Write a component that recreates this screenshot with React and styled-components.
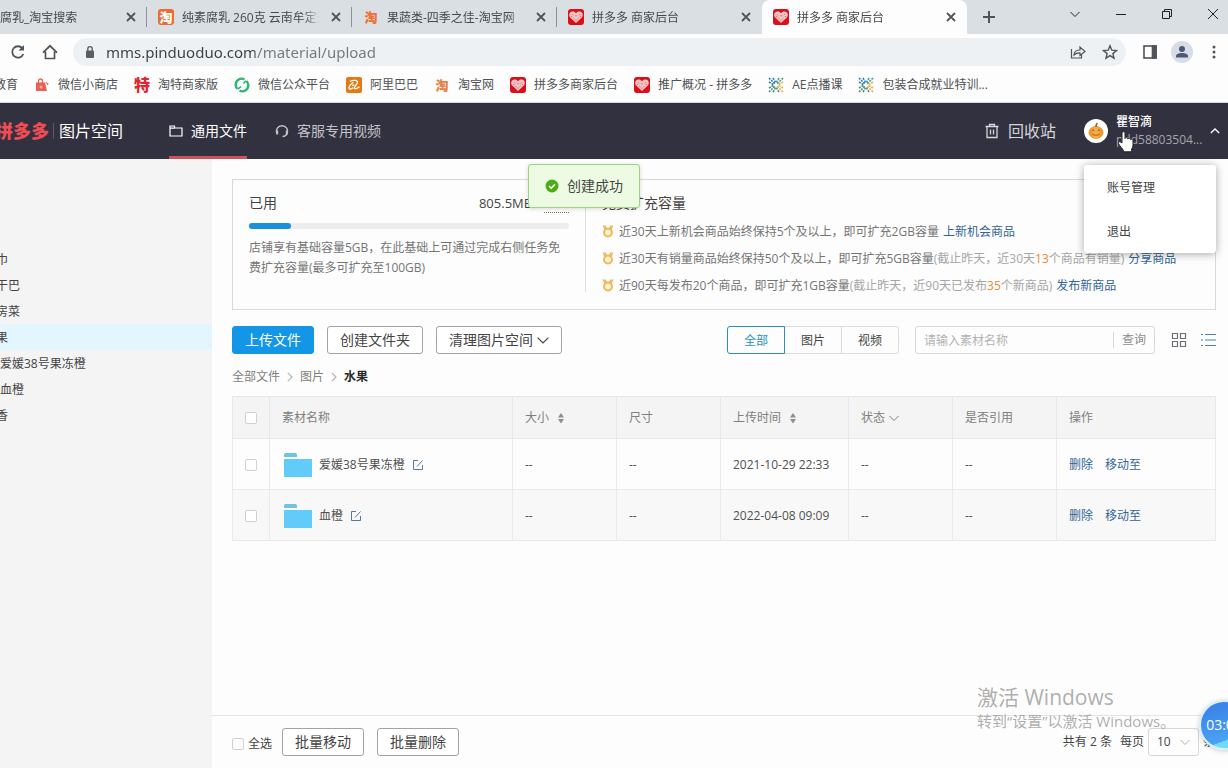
import styled, { createGlobalStyle } from "styled-components";

const GlobalStyle = createGlobalStyle`
  * {
    box-sizing: border-box;
  }
  body {
    margin: 0;
    background: #fdfdfd;
  }
  body, button, input, select {
    font-family: "Open Sans", "Noto Sans CJK SC", sans-serif;
    font-size: 12px;
    line-height: 20px;
    color: #444;
  }
  button, input, select {
    margin: 0;
    padding: 0;
    border: 0;
    background: none;
  }
  a {
    text-decoration: none;
  }
  svg {
    display: block;
    flex: none;
  }
`;

const Page = styled.div`
  position: relative;
  display: flex;
  flex-direction: column;
  min-height: 100vh;
  overflow: hidden;
`;

//---------------------------------
// browser window

const TabStrip = styled.div`
  display: flex;
  height: 34px;
  background: #dadfe3;
`;

const Tab = styled.div`
  display: flex;
  align-items: center;
  flex: none;
  gap: 8px;
  width: ${({ $first }) => ($first ? "147px" : "205px")};
  padding: 0 8px 0 ${({ $first }) => ($first ? "0" : "11px")};
  border-radius: ${({ $active }) => ($active ? "8px 8px 0 0" : "0")};
  background: ${({ $active }) => ($active ? "#fdfdfd" : "none")};
  color: #45494d;
`;

const TabTitle = styled.span`
  flex: 1;
  padding-top: 2px;
  overflow: hidden;
  white-space: nowrap;
  mask-image: linear-gradient(to right, #000 88%, transparent);
`;

const TabDivider = styled.span`
  width: 1px;
  height: 20px;
  margin: 7px 0 0 -1px;
  background: ${({ $hidden }) => ($hidden ? "transparent" : "#8d9297")};
`;

const IconButton = styled.button`
  display: flex;
  align-items: center;
  justify-content: center;
  flex: none;
  width: ${({ $size }) => $size || 16}px;
  height: ${({ $size }) => $size || 16}px;
  color: ${({ $color }) => $color || "#505357"};
`;

const NewTab = styled.div`
  display: flex;
  align-items: center;
  flex: 1;
  padding-left: 14px;
`;

const WindowButtons = styled.div`
  display: flex;
  gap: 30px;
  padding: 6px 7px 0 0;
`;

const Toolbar = styled.div`
  display: flex;
  align-items: center;
  gap: 16px;
  height: 35px;
  padding: 0 6px 0 10px;
`;

const AddressBar = styled.div`
  display: flex;
  align-items: center;
  flex: 1;
  gap: 8px;
  height: 28px;
  padding: 0 8px 0 9px;
  margin-left: -1px;
  border-radius: 14px;
  background: #eef1f3;
`;

const AddressInput = styled.input`
  flex: 1;
  min-width: 0;
  font-size: 15px;
  font-family: "Noto Sans", "Noto Sans CJK SC", sans-serif;
  outline: none;
  color: transparent;
  background-image: linear-gradient(to right, #3c3f43 149px, #74787c 149px);
  background-clip: text;
`;

const AddressIcons = styled.div`
  display: flex;
  gap: 16px;
`;

const ProfileCircle = styled.button`
  display: flex;
  align-items: center;
  justify-content: center;
  width: 22px;
  height: 22px;
  margin: 0 -3px;
  border-radius: 50%;
  background: #d8dce8;
`;

const Bookmarks = styled.nav`
  display: flex;
  align-items: center;
  gap: 16px;
  height: 34px;
  padding-bottom: 2px;
  border-bottom: 1px solid #d4d6da;
`;

const Bookmark = styled.a`
  display: flex;
  align-items: center;
  gap: 8px;
  color: #4d5054;
  white-space: nowrap;
`;

const CutBookmark = styled(Bookmark)`
  justify-content: flex-end;
  width: 18px;
  overflow: hidden;
`;

const GlyphIcon = styled.span`
  flex: none;
  width: 16px;
  height: 16px;
  border-radius: 3px;
  font-size: ${({ $big }) => ($big ? "16px" : "13px")};
  font-weight: 900;
  line-height: 16px;
  text-align: center;
  color: ${({ $color }) => $color};
  background: ${({ $bg }) => $bg || "none"};
`;

//---------------------------------
// site header

const Header = styled.header`
  display: flex;
  align-items: center;
  height: 56px;
  padding-right: 12px;
  background: #32313f;
  color: #fff;
`;

const Logo = styled.div`
  display: flex;
  justify-content: flex-end;
  width: 49px;
  overflow: hidden;
  font-size: 18px;
  font-weight: 900;
  line-height: 28px;
  white-space: nowrap;
  color: #ee4d55;
`;

const SpaceTitle = styled.h1`
  margin: 0 46px 0 4px;
  padding-left: 5px;
  border-left: 1px solid #5a5966;
  font-size: 16px;
  font-weight: 400;
  line-height: 16px;
`;

const HeaderNav = styled.nav`
  display: flex;
  flex: 1;
  gap: 28px;
`;

const HeaderLink = styled.a`
  display: flex;
  align-items: center;
  gap: 8px;
  height: 56px;
  padding-top: 3px;
  border-bottom: 3px solid ${({ $active }) => ($active ? "#cb5459" : "transparent")};
  font-size: 14px;
  color: ${({ $active }) => ($active ? "#fff" : "#c4c4ca")};
`;

const Recycle = styled.a`
  display: flex;
  align-items: center;
  gap: 8px;
  margin-right: 28px;
  font-size: 16px;
  color: #d5d5da;
`;

const UserMenu = styled.div`
  position: relative;
  display: flex;
  align-items: center;
  gap: 8px;
  width: 132px;
  height: 56px;
`;

const UserText = styled.div`
  flex: 1;
  line-height: 18px;
  white-space: nowrap;
`;

const UserName = styled.div`
  font-weight: 500;
`;

const UserAccount = styled.div`
  color: #a5a5ad;
`;

const Dropdown = styled.div`
  position: absolute;
  z-index: 2;
  top: 62px;
  right: 0;
  display: flex;
  flex-direction: column;
  width: 132px;
  border-radius: 3px;
  background: #fff;
  box-shadow: 0 1px 8px rgba(0, 0, 0, 0.35);
`;

const DropdownItem = styled.button`
  height: 44px;
  padding: 2px 23px 0;
  text-align: left;
`;

const HandCursor = styled.svg`
  position: absolute;
  z-index: 3;
  top: 27px;
  left: 33px;
`;

const Toast = styled.div`
  position: absolute;
  z-index: 2;
  top: 164px;
  left: 43%;
  display: flex;
  align-items: center;
  gap: 8px;
  height: 44px;
  padding: 0 16px;
  border: 1px solid #9fd284;
  border-radius: 3px;
  background: #eefbe3;
  box-shadow: 0 1px 4px rgba(0, 0, 0, 0.15);
  font-size: 14px;
`;

//---------------------------------
// body

const Body = styled.div`
  display: flex;
  flex: 1;
`;

const Sidebar = styled.aside`
  flex: none;
  width: 212px;
  padding-top: 87px;
  overflow: hidden;
  background: #f4f4f4;
`;

const Tree = styled.ul`
  margin: 0 0 0 -4px;
  padding: 0;
  list-style: none;
`;

const TreeItem = styled.li`
  height: 26px;
  padding-left: ${({ $level }) => ($level === 2 ? "4px" : "0")};
  line-height: 28px;
  background: ${({ $active }) => ($active ? "#e3f6fd" : "none")};
`;

const Content = styled.div`
  display: flex;
  flex-direction: column;
  flex: 1;
  min-width: 0;
`;

const Main = styled.main`
  flex: 1;
  padding: 20px 12px 0 20px;
`;

const CapacityCard = styled.section`
  display: flex;
  height: 131px;
  padding: 13px 16px 16px;
  border: 1px solid #d9d9d9;
`;

const Used = styled.div`
  width: 337px;
  padding-right: 16px;
  margin-bottom: 1px;
  border-right: 1px solid #e0e0e0;
  color: #757575;
`;

const UsedRow = styled.div`
  display: flex;
  justify-content: space-between;
  margin-bottom: 10px;
  font-size: 14px;
  color: #444;
`;

const Amount = styled.span`
  font-size: 13px;
`;

const Limit = styled.span`
  border-bottom: 1px dotted #777;
`;

const Meter = styled.div`
  height: 6px;
  margin-bottom: 9px;
  border-radius: 3px;
  background: #ededee;
`;

const MeterFill = styled.div`
  height: 6px;
  border-radius: 3px;
  background: #1890dc;
`;

const Tasks = styled.div`
  flex: 1;
  padding-left: 16px;
`;

const TasksTitle = styled.h2`
  margin: 0 0 5px;
  font-size: 14px;
  font-weight: 400;
  line-height: 20px;
`;

const Task = styled.div`
  display: flex;
  align-items: center;
  gap: 5px;
  height: 27px;
  color: #757575;
  white-space: nowrap;
`;

const Muted = styled.span`
  color: #a6a6a6;
`;

const Orange = styled.span`
  color: #ef8a2b;
`;

const Link = styled.a`
  margin-left: ${({ $gap }) => $gap || 0}px;
  color: #336596;
`;

const Actions = styled.div`
  display: flex;
  align-items: center;
  gap: 13px;
  margin: 16px 0 13px;
`;

const Button = styled.button`
  display: flex;
  align-items: center;
  gap: 4px;
  height: 28px;
  padding: 0 12px;
  border: 1px solid ${({ $primary }) => ($primary ? "#1496e8" : "#a3a3a3")};
  border-radius: 3px;
  background: ${({ $primary }) => ($primary ? "#1496e8" : "#fff")};
  font-size: 14px;
  color: ${({ $primary }) => ($primary ? "#fff" : "#444")};
  white-space: nowrap;
`;

const Segments = styled.div`
  display: flex;
  margin-left: auto;
`;

const Segment = styled.button`
  position: relative;
  z-index: ${({ $active }) => ($active ? 1 : 0)};
  width: 58px;
  height: 28px;
  margin-right: -1px;
  padding-top: 2px;
  border: 1px solid ${({ $active }) => ($active ? "#2a8fc0" : "#dcdcdc")};
  color: ${({ $active }) => ($active ? "#2a8fc0" : "#444")};

  &:first-child {
    border-radius: 3px 0 0 3px;
  }
  &:last-child {
    border-radius: 0 3px 3px 0;
  }
`;

const Search = styled.form`
  display: flex;
  align-items: center;
  width: 240px;
  height: 28px;
  margin: 0 3px 0 4px;
  border: 1px solid #d8d8d8;
  border-radius: 3px;
`;

const SearchInput = styled.input`
  flex: 1;
  min-width: 0;
  padding: 2px 8px 0;
  outline: none;

  &::placeholder {
    color: #b3b3b3;
  }
`;

const SearchButton = styled.button`
  height: 16px;
  padding: 0 8px;
  border-left: 1px solid #d8d8d8;
  line-height: 16px;
  color: #8f8f8f;
`;

const Breadcrumb = styled.nav`
  display: flex;
  align-items: center;
  gap: 7px;
  margin-bottom: 9px;
  color: #b5b5b5;
`;

const Crumb = styled.a`
  color: ${({ $current }) => ($current ? "#2b2b2b" : "#808080")};
  font-weight: ${({ $current }) => ($current ? 700 : 400)};
`;

const Table = styled.table`
  width: 100%;
  table-layout: fixed;
  border-collapse: collapse;
`;

const HeadCell = styled.th`
  width: ${({ $width }) => ($width ? `${$width}px` : "auto")};
  height: 42px;
  padding: 0 12px;
  border: 1px solid #e7e7e7;
  background: #f4f4f4;
  font-weight: 400;
  text-align: left;
  color: #808080;
`;

const Cell = styled.td`
  height: 51px;
  padding: 2px 12px 0;
  border: 1px solid #e9e9e9;
  background: ${({ $odd }) => ($odd ? "#f8f8f8" : "#fdfdfd")};
  color: #505050;
  white-space: nowrap;
`;

const CellRow = styled.div`
  display: flex;
  align-items: center;
  gap: 8px;
`;

const StatusRow = styled(CellRow)`
  gap: 4px;
`;

const FileRow = styled(CellRow)`
  gap: 7px;
  padding-left: 2px;
`;

const Checkbox = styled.input.attrs({ type: "checkbox" })`
  display: block;
  appearance: none;
  width: 12px;
  height: 12px;
  border: 1px solid #d0d0d0;
  border-radius: 2px;
  background: #fff;
`;

const Footer = styled.footer`
  display: flex;
  align-items: center;
  height: 53px;
  padding: 0 0 0 20px;
  border-top: 1px solid #e4e4e4;
`;

const SelectAll = styled.label`
  display: flex;
  align-items: center;
  gap: 4px;
  padding-top: 4px;
`;

const FooterButtons = styled.div`
  display: flex;
  gap: 13px;
  margin-left: 10px;
`;

const Pager = styled.div`
  display: flex;
  align-items: center;
  gap: 4px;
  margin: 0 13px 0 auto;
  white-space: nowrap;
`;

const PageLabel = styled.label`
  margin-left: 4px;
`;

const SelectBox = styled.div`
  display: flex;
  align-items: center;
  width: 51px;
  height: 28px;
  padding-right: 8px;
  border: 1px solid #d8d8d8;
  border-radius: 3px;
  color: #b0b0b0;
`;

const Select = styled.select`
  flex: 1;
  height: 26px;
  padding-left: 8px;
  appearance: none;
`;

const Watermark = styled.div`
  position: absolute;
  right: 50px;
  bottom: 35px;
  width: 201px;
  font-size: 15px;
  line-height: 24px;
  color: rgba(140, 140, 140, 0.7);
  white-space: nowrap;
  pointer-events: none;
`;

const WatermarkTitle = styled.div`
  font-size: 21px;
`;

const TimerBall = styled.div`
  position: absolute;
  right: -21px;
  bottom: 18px;
  width: 50px;
  height: 50px;
  border: 2px solid #d5effc;
  border-radius: 50%;
  background: linear-gradient(160deg, #3b86e8 20%, #4aa3f3 75%, #6fdcf5 76%);
  box-shadow: 0 1px 5px rgba(0, 0, 0, 0.2);
  font-size: 14px;
  line-height: 46px;
  text-align: center;
  color: #fff;
`;

//---------------------------------
// icons

function Stroke({ size = 16, box = 16, width = 1, children }) {
  return (
    <svg
      width={size}
      height={size}
      viewBox={`0 0 ${box} ${box}`}
      fill="none"
      stroke="currentColor"
      strokeWidth={width}
    >
      {children}
    </svg>
  );
}

function PddIcon() {
  return (
    <svg width="16" height="16" viewBox="0 0 16 16">
      <rect width="16" height="16" rx="3" fill="#d9101c" />
      <path
        d="M8 14 1.900 8.200C.3 6 1.500 2.900 4.300 2.600 5.800 2.500 7 3.200 8 4.200c1-1 2.200-1.700 3.700-1.600 2.800.3 4 3.400 2.400 5.600Z"
        fill="#f7c4c4"
      />
      <path
        d="M4 5.200l1.200 1.200M12 5.200l-1.200 1.200M8 6v1.500M5.500 9l1 .8M10.500 9l-1 .8M8 10.500v1.200M3.200 7.500h1M11.800 7.500h1"
        fill="none"
        stroke="#e2545c"
        strokeWidth=".9"
      />
    </svg>
  );
}

function BubbleIcon() {
  return (
    <GlyphIcon $bg="#ee6b2f" $color="#fff">
      淘
    </GlyphIcon>
  );
}

function BagIcon() {
  return (
    <svg width="16" height="16" viewBox="0 0 16 16">
      <path d="M2 5.500h9l2 8.500H2Z" fill="#e8604f" />
      <path d="M4.500 6.500V4a2 2 0 0 1 4 0v2.500" fill="none" stroke="#e8604f" strokeWidth="1.300" />
      <path d="M5.500 10h3M7 8.500v3" stroke="#f9cfc8" />
      <path d="m12 5 .7 1.500 1.600.3-1.200 1" fill="none" stroke="#e8604f" />
    </svg>
  );
}

function WechatIcon() {
  return (
    <svg width="16" height="16" viewBox="0 0 16 16" fill="none" stroke="#2bb673" strokeWidth="2.400">
      <path d="M10.500 2.300C6 .3 1.500 3.500 1.700 8c.1 1.700.8 3 1.800 4" />
      <path d="M5.500 13.700c4.500 2 9-1.200 8.800-5.700-.1-1.700-.8-3-1.800-4" />
      <path d="M4 12.200 7 9.500M12 3.800 9.500 6.500" strokeWidth="1.600" />
    </svg>
  );
}

function AliIcon() {
  return (
    <svg width="16" height="16" viewBox="0 0 16 16">
      <rect width="16" height="16" rx="2" fill="#e57a14" />
      <path
        d="M4 4.500c3-1.800 8-1.500 7.500.8-.4 1.900-3 4.200-3.300 5.500-.3 1.500 3.300.8 5.300-1M7.500 5.500c-2.500 1-4.800 4-4.500 5.700.3 1.400 2.300.9 4-.4M6 8.300l2.500-.5"
        fill="none"
        stroke="#fff"
        strokeWidth="1.300"
      />
    </svg>
  );
}

function SparkIcon() {
  return (
    <svg width="16" height="16" viewBox="0 0 16 16" fill="none" strokeWidth="1.600" strokeDasharray="2 1">
      <path d="M1 1l6 6M5 1l3 5M1 5l5 3" stroke="#2f7fb5" />
      <path d="M15 1 9 7M11 1 8 6" stroke="#3b9c8f" />
      <path d="M15 5l-5 3M15 11l-5-3M15 15 9 9" stroke="#e3b04b" />
      <path d="M1 15l6-6M5 15l3-5M1 11l5-3M11 15l-3-5" stroke="#4a8f7e" />
    </svg>
  );
}

function CloseIcon() {
  return (
    <Stroke width={1.800}>
      <path d="m4 4 8 8M12 4l-8 8" />
    </Stroke>
  );
}

function DownIcon({ size = 10 }) {
  return (
    <Stroke size={size} box={10}>
      <path d="m.5 3 4.500 4.500L9.500 3" />
    </Stroke>
  );
}

function RightIcon() {
  return (
    <svg width="6" height="10" viewBox="0 0 6 10" fill="none" stroke="currentColor" strokeWidth="1.200">
      <path d="m.8.8 4.200 4.200L.8 9.200" />
    </svg>
  );
}

function SortIcon() {
  return (
    <svg width="8" height="12" viewBox="0 0 8 12" fill="#8e8e8e">
      <path d="M4 1l3 4.500H1ZM4 11.500 1 7h6Z" />
    </svg>
  );
}

function MedalIcon() {
  return (
    <svg width="12" height="14" viewBox="0 0 12 14" fill="none">
      <path d="M.5.500h3.300L5 3.500 2.500 5ZM11.500.500H8.200L7 3.500 9.500 5Z" fill="#f3b765" />
      <circle cx="6" cy="7.500" r="3.900" fill="#fff3d6" stroke="#f2b557" strokeWidth="2" />
    </svg>
  );
}

function FolderIcon() {
  return (
    <svg width="28" height="24" viewBox="0 0 28 24">
      <path d="M0 4V1.500Q0 0 1.500 0H11q2 0 2 2v2Z" fill="#6fc3e3" />
      <path d="M0 6h28v18H0Z" fill="#63cbfa" />
    </svg>
  );
}

function EditIcon() {
  return (
    <Stroke size={12} box={12}>
      <g stroke="#587a9c">
        <path d="M6 1.500H1.500v9h9V6" />
        <path d="M5 7.500 10.500 1.500" />
      </g>
    </Stroke>
  );
}

//---------------------------------

const tabs = [
  { title: "腐乳_淘宝搜索" },
  { title: "纯素腐乳 260克 云南牟定天台", icon: <BubbleIcon /> },
  { title: "果蔬类-四季之佳-淘宝网", icon: <GlyphIcon $color="#ef7034">淘</GlyphIcon> },
  { title: "拼多多 商家后台", icon: <PddIcon /> },
  { title: "拼多多 商家后台", icon: <PddIcon />, active: true },
];

const bookmarks = [
  { title: "微信小商店", icon: <BagIcon /> },
  { title: "淘特商家版", icon: <GlyphIcon $big $color="#e02430">特</GlyphIcon> },
  { title: "微信公众平台", icon: <WechatIcon /> },
  { title: "阿里巴巴", icon: <AliIcon /> },
  { title: "淘宝网", icon: <GlyphIcon $color="#e58243">淘</GlyphIcon> },
  { title: "拼多多商家后台", icon: <PddIcon /> },
  { title: "推广概况 - 拼多多", icon: <PddIcon /> },
  { title: "AE点播课", icon: <SparkIcon /> },
  { title: "包装合成就业特训...", icon: <SparkIcon /> },
];

const tree = [
  { name: "巾", level: 1 },
  { name: "干巴", level: 1 },
  { name: "房菜", level: 1 },
  { name: "果", level: 1, active: true },
  { name: "爱媛38号果冻橙", level: 2 },
  { name: "血橙", level: 2 },
  { name: "香", level: 1 },
];

const tasks = [
  {
    text: "近30天上新机会商品始终保持5个及以上，即可扩充2GB容量",
    link: "上新机会商品",
  },
  {
    text: "近30天有销量商品始终保持50个及以上，即可扩充5GB容量",
    before: "(截止昨天，近30天",
    count: 13,
    after: "个商品有销量)",
    link: "分享商品",
  },
  {
    text: "近90天每发布20个商品，即可扩充1GB容量",
    before: "(截止昨天，近90天已发布",
    count: 35,
    after: "个新商品)",
    link: "发布新商品",
  },
];

const files = [
  { name: "爱媛38号果冻橙", time: "2021-10-29 22:33" },
  { name: "血橙", time: "2022-04-08 09:09" },
];

const usedPercent = 13;

function Browser() {
  return (
    <>
      <TabStrip>
        {tabs.map((tab, index) => (
          <Tab key={index} $first={index === 0} $active={tab.active}>
            {tab.icon}
            <TabTitle>{tab.title}</TabTitle>
            <IconButton type="button" aria-label="关闭标签页">
              <CloseIcon />
            </IconButton>
          </Tab>
        )).flatMap((tab, index) => [
          tab,
          <TabDivider key={`divider-${index}`} $hidden={index > 2} />,
        ])}
        <NewTab>
          <IconButton type="button" aria-label="新标签页">
            <Stroke width={2}>
              <path d="M8 2v12M2 8h12" />
            </Stroke>
          </IconButton>
        </NewTab>
        <WindowButtons>
          <IconButton type="button" aria-label="搜索标签页" $color="#222">
            <DownIcon />
          </IconButton>
          <IconButton type="button" aria-label="最小化" $color="#222">
            <Stroke>
              <path d="M3 8.500h10" />
            </Stroke>
          </IconButton>
          <IconButton type="button" aria-label="还原" $color="#222">
            <Stroke>
              <path d="M3.500 5.500h7v7h-7ZM5.500 5.500v-2h7v7h-2" />
            </Stroke>
          </IconButton>
          <IconButton type="button" aria-label="关闭" $color="#222">
            <Stroke>
              <path d="m3 3 10 10M13 3 3 13" />
            </Stroke>
          </IconButton>
        </WindowButtons>
      </TabStrip>

      <Toolbar>
        <IconButton type="button" aria-label="重新加载">
          <Stroke width={1.800}>
            <path d="M13.300 10a5.700 5.700 0 1 1-1-5.800" />
            <path d="M14 1v5.500H8.500Z" fill="currentColor" stroke="none" />
          </Stroke>
        </IconButton>
        <IconButton type="button" aria-label="主页">
          <Stroke width={1.700}>
            <path d="M1 8.700 8 1.800l7 6.900M3.500 7.500v7h9v-7" />
          </Stroke>
        </IconButton>
        <AddressBar>
          <svg width="16" height="16" viewBox="0 0 16 16" fill="none">
            <rect x="4" y="6.500" width="8" height="7.500" rx="1" fill="#5a5e62" />
            <path d="M5.800 7V4.800a2.200 2.200 0 0 1 4.400 0V7" stroke="#5a5e62" strokeWidth="1.400" />
          </svg>
          <AddressInput aria-label="地址" defaultValue="mms.pinduoduo.com/material/upload" />
          <AddressIcons>
            <IconButton type="button" aria-label="分享">
              <Stroke width={1.2}>
                <path d="M1.500 5v9h10v-3" />
                <path d="M4 11c.3-3.500 2.500-5 6-5V3l5 4.500-5 4V8.800C7.500 8.700 5.500 9.500 4 11Z" />
              </Stroke>
            </IconButton>
            <IconButton type="button" aria-label="收藏">
              <Stroke width={1.4}>
                <path d="m8 1.800 1.800 4.400 4.700.4-3.600 3 1.100 4.600L8 11.700l-4 2.500 1.100-4.600-3.600-3 4.700-.4Z" />
              </Stroke>
            </IconButton>
          </AddressIcons>
        </AddressBar>
        <IconButton type="button" aria-label="侧边栏">
          <Stroke width={1.6}>
            <rect x="2" y="2" width="12" height="12" />
            <path d="M10.500 2H14v12h-3.500Z" fill="currentColor" />
          </Stroke>
        </IconButton>
        <ProfileCircle type="button" aria-label="个人资料">
          <svg width="14" height="14" viewBox="0 0 14 14" fill="#4f5873">
            <circle cx="7" cy="4" r="3" />
            <path d="M1 12.500V11c0-4 12-4 12 0v1.500Z" />
          </svg>
        </ProfileCircle>
        <IconButton type="button" aria-label="更多">
          <svg width="16" height="16" viewBox="0 0 16 16" fill="currentColor">
            <circle cx="8" cy="3" r="1.500" />
            <circle cx="8" cy="8" r="1.500" />
            <circle cx="8" cy="13" r="1.500" />
          </svg>
        </IconButton>
      </Toolbar>

      <Bookmarks>
        <CutBookmark href="#">教育</CutBookmark>
        {bookmarks.map((bookmark) => (
          <Bookmark key={bookmark.title} href="#">
            {bookmark.icon}
            {bookmark.title}
          </Bookmark>
        ))}
      </Bookmarks>
    </>
  );
}

function SiteHeader() {
  return (
    <Header>
      <Logo>拼多多</Logo>
      <SpaceTitle>图片空间</SpaceTitle>
      <HeaderNav>
        <HeaderLink href="#" $active>
          <Stroke size={14} box={14} width={1.2}>
            <path d="M1 2h4.500v2H13v8H1ZM1 4.200h5" />
          </Stroke>
          通用文件
        </HeaderLink>
        <HeaderLink href="#">
          <Stroke size={14} box={14} width={1.4}>
            <path d="M2 9.500A5.500 5.500 0 1 1 12 9.500M12 9.500c-.7 2-2 3-4.500 3" />
            <path d="M2.200 6.500v4M11.800 6.500v4" strokeWidth="2" />
          </Stroke>
          客服专用视频
        </HeaderLink>
      </HeaderNav>
      <Recycle href="#">
        <Stroke size={16} width={1.3}>
          <path d="M1.500 3.500h13M5.500 3V1.500h5V3M3 3.500v11h10v-11M6.500 6.500v5M9.500 6.500v5" />
        </Stroke>
        回收站
      </Recycle>
      <UserMenu>
        <svg width="24" height="24" viewBox="0 0 24 24">
          <circle cx="12" cy="12" r="12" fill="#fff" />
          <ellipse cx="12" cy="13.500" rx="7.500" ry="6.500" fill="#ee9a32" />
          <ellipse cx="12" cy="13.500" rx="3.500" ry="6.500" fill="#f5ad45" />
          <path d="M12 8c-.3-2 .5-3 1.500-4" fill="none" stroke="#7a6a35" strokeWidth="1.600" />
          <path d="m8 12 1.500-2 1 2.200ZM13.500 12.200l1-2.200 1.500 2ZM7.500 14.500c2.500 1.500 6.500 1.500 9 0-1.500 3-7.500 3-9 0Z" fill="#b9611f" />
        </svg>
        <UserText>
          <UserName>瞿智滴</UserName>
          <UserAccount>pdd58803504...</UserAccount>
        </UserText>
        <Stroke size={10} box={12} width={1.6}>
          <path d="m1 8.500 5-5 5 5" />
        </Stroke>
        <HandCursor width="18" height="23" viewBox="0 0 18 23">
          <path
            d="M5 13V3.200c0-2 3-2 3 0V8.500c.5-1.200 2.700-1 2.900.4.700-1 2.500-.7 2.700.6.900-.7 2.400-.2 2.400 1.300V15c0 2.300-1.500 3.200-1.500 5.500v1.300H6.500v-1.300C5.500 18.500 3 16.500 1.600 13.700c-.8-1.700 1.300-2.700 2.300-1.500Z"
            fill="#fff"
            stroke="#222"
          />
        </HandCursor>
        <Dropdown>
          <DropdownItem type="button">账号管理</DropdownItem>
          <DropdownItem type="button">退出</DropdownItem>
        </Dropdown>
      </UserMenu>
    </Header>
  );
}

function Capacity() {
  return (
    <CapacityCard>
      <Used>
        <UsedRow>
          <span>已用</span>
          <Amount>
            805.5MB / <Limit>6GB</Limit>
          </Amount>
        </UsedRow>
        <Meter>
          <MeterFill style={{ width: `${usedPercent}%` }} />
        </Meter>
        店铺享有基础容量5GB，在此基础上可通过完成右侧任务免费扩充容量(最多可扩充至100GB)
      </Used>
      <Tasks>
        <TasksTitle>免费扩充容量</TasksTitle>
        {tasks.map((task) => (
          <Task key={task.link}>
            <MedalIcon />
            <div>
              {task.text}
              {task.count && (
                <Muted>
                  {task.before}
                  <Orange>{task.count}</Orange>
                  {task.after}
                </Muted>
              )}
              <Link href="#" $gap={4}>
                {task.link}
              </Link>
            </div>
          </Task>
        ))}
      </Tasks>
    </CapacityCard>
  );
}

function FileTable() {
  return (
    <Table>
      <thead>
        <tr>
          <HeadCell $width={37}>
            <Checkbox aria-label="全选" />
          </HeadCell>
          <HeadCell>素材名称</HeadCell>
          <HeadCell $width={104}>
            <CellRow>
              大小 <SortIcon />
            </CellRow>
          </HeadCell>
          <HeadCell $width={104}>尺寸</HeadCell>
          <HeadCell $width={128}>
            <CellRow>
              上传时间 <SortIcon />
            </CellRow>
          </HeadCell>
          <HeadCell $width={104}>
            <StatusRow>
              状态 <DownIcon />
            </StatusRow>
          </HeadCell>
          <HeadCell $width={104}>是否引用</HeadCell>
          <HeadCell $width={159}>操作</HeadCell>
        </tr>
      </thead>
      <tbody>
        {files.map((file, index) => (
          <tr key={file.name}>
            <Cell $odd={index % 2}>
              <Checkbox aria-label={file.name} />
            </Cell>
            <Cell $odd={index % 2}>
              <FileRow>
                <FolderIcon />
                <span>{file.name}</span>
                <IconButton type="button" aria-label="重命名" $size={12}>
                  <EditIcon />
                </IconButton>
              </FileRow>
            </Cell>
            <Cell $odd={index % 2}>--</Cell>
            <Cell $odd={index % 2}>--</Cell>
            <Cell $odd={index % 2}>{file.time}</Cell>
            <Cell $odd={index % 2}>--</Cell>
            <Cell $odd={index % 2}>--</Cell>
            <Cell $odd={index % 2}>
              <Link href="#">删除</Link>
              <Link href="#" $gap={12}>
                移动至
              </Link>
            </Cell>
          </tr>
        ))}
      </tbody>
    </Table>
  );
}

export default function App() {
  return (
    <Page>
      <GlobalStyle />
      <Browser />
      <SiteHeader />
      <Body>
        <Sidebar>
          <Tree>
            {tree.map((item) => (
              <TreeItem key={item.name} $level={item.level} $active={item.active}>
                {item.name}
              </TreeItem>
            ))}
          </Tree>
        </Sidebar>
        <Content>
          <Main>
            <Capacity />
            <Actions>
              <Button type="button" $primary>
                上传文件
              </Button>
              <Button type="button">创建文件夹</Button>
              <Button type="button">
                清理图片空间 <DownIcon size={12} />
              </Button>
              <Segments>
                <Segment type="button" $active>
                  全部
                </Segment>
                <Segment type="button">图片</Segment>
                <Segment type="button">视频</Segment>
              </Segments>
              <Search onSubmit={(event) => event.preventDefault()}>
                <SearchInput aria-label="素材名称" placeholder="请输入素材名称" />
                <SearchButton type="submit">查询</SearchButton>
              </Search>
              <IconButton type="button" aria-label="网格" $color="#6f6f78">
                <Stroke width={1.2}>
                  <path d="M1.500 1.500h5v5h-5ZM9.500 1.500h5v5h-5ZM1.500 9.500h5v5h-5ZM9.500 9.500h5v5h-5Z" />
                </Stroke>
              </IconButton>
              <IconButton type="button" aria-label="列表" $color="#4f82bd">
                <Stroke width={1.2}>
                  <path d="M5 2.500h11M5 8h11M5 13.500h11M1 2.500h2M1 8h2M1 13.500h2" />
                </Stroke>
              </IconButton>
            </Actions>
            <Breadcrumb>
              <Crumb href="#">全部文件</Crumb>
              <RightIcon />
              <Crumb href="#">图片</Crumb>
              <RightIcon />
              <Crumb href="#" $current>
                水果
              </Crumb>
            </Breadcrumb>
            <FileTable />
          </Main>
          <Footer>
            <SelectAll>
              <Checkbox />
              全选
            </SelectAll>
            <FooterButtons>
              <Button type="button">批量移动</Button>
              <Button type="button">批量删除</Button>
            </FooterButtons>
            <Pager>
              <span>共有 2 条</span>
              <PageLabel htmlFor="page-size">每页</PageLabel>
              <SelectBox>
                <Select id="page-size" defaultValue="10">
                  <option>10</option>
                  <option>20</option>
                  <option>50</option>
                </Select>
                <DownIcon />
              </SelectBox>
              <span>条</span>
            </Pager>
          </Footer>
        </Content>
      </Body>

      <Toast>
        <svg width="14" height="14" viewBox="0 0 14 14">
          <circle cx="7" cy="7" r="6.500" fill="#4cae14" />
          <path d="m4 7 2.200 2.200L10 5.300" fill="none" stroke="#fff" strokeWidth="1.500" />
        </svg>
        创建成功
      </Toast>
      <Watermark>
        <WatermarkTitle>激活 Windows</WatermarkTitle>
        转到“设置”以激活 Windows。
      </Watermark>
      <TimerBall>03:00</TimerBall>
    </Page>
  );
}
